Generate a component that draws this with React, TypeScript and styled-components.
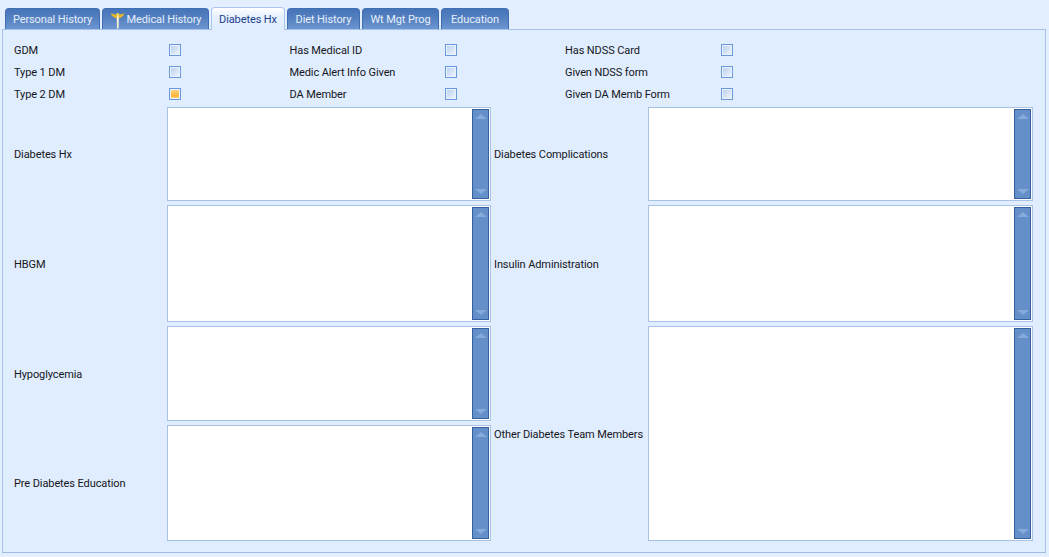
import React from 'react';
import styled, { createGlobalStyle } from 'styled-components';

const GlobalStyle = createGlobalStyle`
  html, body {
    margin: 0;
    padding: 0;
    background: #e3eeff;
    font-family: Roboto, "Liberation Sans", Arial, sans-serif;
    font-size: 11px;
    letter-spacing: -0.1px;
    color: #15161c;
  }
`;

const Page = styled.div`
  width: 1049px;
  height: 557px;
  padding: 7px 3px 4px 2px;
  box-sizing: border-box;
  display: flex;
  flex-direction: column;
  overflow: hidden;
`;

const TabBar = styled.div`
  display: flex;
  align-items: flex-end;
  gap: 2px;
  height: 22px;
  padding-left: 3px;
  position: relative;
  z-index: 1;
`;

const Tab = styled.div<{ $active?: boolean; $width: number }>`
  width: ${(p) => p.$width}px;
  height: ${(p) => (p.$active ? 23 : 21)}px;
  margin-bottom: ${(p) => (p.$active ? -1 : 0)}px;
  box-sizing: border-box;
  display: flex;
  align-items: center;
  justify-content: center;
  gap: 2px;
  border: 1px solid ${(p) => (p.$active ? '#a9c6ec' : '#3f6fb2')};
  border-bottom: none;
  border-radius: 4px 4px 0 0;
  background: ${(p) =>
    p.$active
      ? 'linear-gradient(#ffffff, #e6f0ff 40%, #e0edff)'
      : 'linear-gradient(#4574b8, #5480c0 45%, #6c96d0)'};
  color: ${(p) => (p.$active ? '#1b3f8b' : '#e6effc')};
  white-space: nowrap;
`;

const Panel = styled.div`
  flex: 1;
  box-sizing: border-box;
  border: 1px solid #a5c3ea;
  border-bottom-color: #9dbde8;
  background: #e0edff;
  padding: 9px 11px 11px 11px;
  display: flex;
  flex-direction: column;
  gap: 2px;
`;

const CheckGrid = styled.div`
  display: grid;
  grid-template-columns: 155px 120.5px 155px 120.5px 156px 1fr;
  grid-auto-rows: 22px;
  align-items: center;
`;

const Label = styled.span`
  white-space: nowrap;
`;

const Check = styled.input.attrs({ type: 'checkbox', readOnly: true })`
  appearance: none;
  margin: 0;
  width: 12px;
  height: 12px;
  box-sizing: border-box;
  border: 1px solid #6a98da;
  outline: 1px solid #eaf2fe;
  outline-offset: -2px;
  background: linear-gradient(135deg, #b6cdec, #f2f7ff);

  &:checked {
    background: linear-gradient(#fdd98a, #fbb437 70%, #fde3a4);
  }
`;

const FormGrid = styled.div`
  display: grid;
  grid-template-columns: 153px 324px 157px 385px;
  grid-template-rows: 94px 117px 95px 116px;
  row-gap: 4px;
  align-items: center;
`;

const FieldLabel = styled(Label)<{ $second?: boolean; $tall?: boolean }>`
  line-height: 14px;
  padding: 2px 0 0 ${(p) => (p.$second ? 3 : 0)}px;
  ${(p) => p.$tall && 'grid-row: span 2;'}
`;

const Memo = styled.div<{ $span?: number }>`
  grid-row: span ${(p) => p.$span ?? 1};
  align-self: stretch;
  box-sizing: border-box;
  border: 1px solid #a9c2e2;
  background: #ffffff;
  display: flex;
  padding: 1px;
`;

const MemoText = styled.textarea`
  flex: 1;
  border: none;
  outline: none;
  resize: none;
  padding: 0;
  background: transparent;
`;

const ScrollBar = styled.div`
  width: 17px;
  box-sizing: border-box;
  border: 1px solid #33609f;
  background: #658fc8;
  display: flex;
  flex-direction: column;
  justify-content: space-between;
  align-items: center;
  padding: 4px 0;
`;

const Arrow = styled.div<{ $down?: boolean }>`
  width: 0;
  height: 0;
  border-left: 6px solid transparent;
  border-right: 6px solid transparent;
  ${(p) => (p.$down ? 'border-top' : 'border-bottom')}: 5px solid #86aadb;
`;

const Caduceus = () => (
  <svg width="15" height="17" viewBox="0 0 15 17" style={{ marginTop: 3 }}>
    <path d="M6.6 2 L7 16.5 L8.6 16.5 L9 2 Z" fill="#f5f2da" />
    <path d="M0.5 1.5 C3 1.8 5 2.2 7 3 L7 6.5 C4.5 6 2 4.5 0.5 1.5 Z" fill="#e0b52c" />
    <path d="M14.5 1.5 C12 1.8 10.5 2.2 8.6 3 L8.6 6.5 C11 6 13 4.5 14.5 1.5 Z" fill="#e0b52c" />
    <circle cx="7.8" cy="2.5" r="1.4" fill="#f3d34e" />
  </svg>
);

const tabs = [
  { label: 'Personal History', width: 95 },
  { label: 'Medical History', width: 107, icon: true },
  { label: 'Diabetes Hx', width: 74, active: true },
  { label: 'Diet History', width: 73 },
  { label: 'Wt Mgt Prog', width: 77 },
  { label: 'Education', width: 68 },
];

const checks = [
  ['GDM', false],
  ['Has Medical ID', false],
  ['Has NDSS Card', false],
  ['Type 1 DM', false],
  ['Medic Alert Info Given', false],
  ['Given NDSS form', false],
  ['Type 2 DM', true],
  ['DA Member', false],
  ['Given DA Memb Form', false],
] as const;

const Field = ({ span }: { span?: number }) => (
  <Memo $span={span}>
    <MemoText />
    <ScrollBar>
      <Arrow />
      <Arrow $down />
    </ScrollBar>
  </Memo>
);

export default function App() {
  return (
    <Page>
      <GlobalStyle />
      <TabBar>
        {tabs.map((t) => (
          <Tab key={t.label} $active={t.active} $width={t.width}>
            {t.icon && <Caduceus />}
            {t.label}
          </Tab>
        ))}
      </TabBar>
      <Panel>
        <CheckGrid>
          {checks.map(([label, checked]) => (
            <React.Fragment key={label}>
              <Label>{label}</Label>
              <Check checked={checked} />
            </React.Fragment>
          ))}
        </CheckGrid>
        <FormGrid>
          <FieldLabel>Diabetes Hx</FieldLabel>
          <Field />
          <FieldLabel $second>Diabetes Complications</FieldLabel>
          <Field />
          <FieldLabel>HBGM</FieldLabel>
          <Field />
          <FieldLabel $second>Insulin Administration</FieldLabel>
          <Field />
          <FieldLabel>Hypoglycemia</FieldLabel>
          <Field />
          <FieldLabel $second $tall>Other Diabetes Team Members</FieldLabel>
          <Field span={2} />
          <FieldLabel>Pre Diabetes Education</FieldLabel>
          <Field />
        </FormGrid>
      </Panel>
    </Page>
  );
}
